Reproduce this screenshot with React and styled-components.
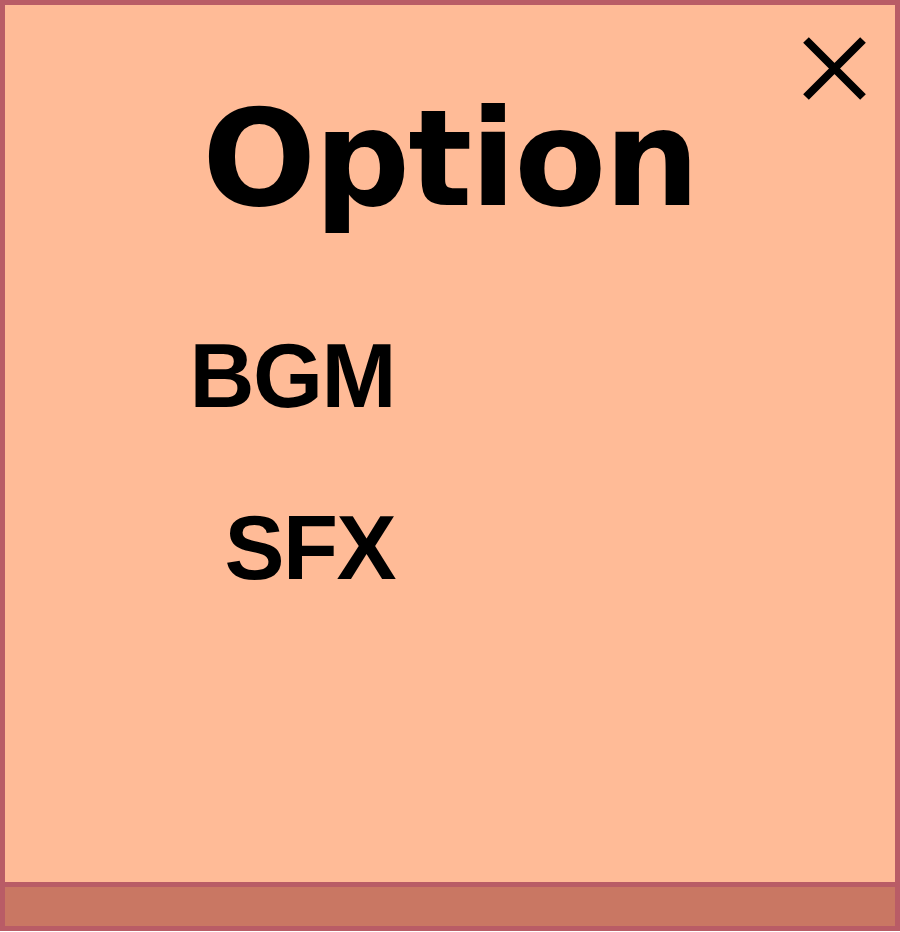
import React from "react";
import styled, { createGlobalStyle } from "styled-components";

const Global = createGlobalStyle`
  html, body { margin: 0; padding: 0; background: #ffffff; }
  * { box-sizing: border-box; }
`;

const Panel = styled.div`
  position: relative;
  width: 900px;
  height: 931px;
  border: 5px solid #b95c66;
  background: #ffbb97;
  display: flex;
  flex-direction: column;
`;

const Body = styled.div`
  flex: 1;
  display: flex;
  flex-direction: column;
`;

const Title = styled.h1`
  margin: 79px 0 0;
  text-align: center;
  font-family: "DejaVu Sans", "Open Sans", sans-serif;
  font-weight: 700;
  font-size: 134px;
  line-height: 150px;
  letter-spacing: -2px;
  color: #000;
`;

const Settings = styled.div`
  display: grid;
  grid-template-columns: 390px 1fr;
  row-gap: 72px;
  margin-top: 92px;
`;

const Label = styled.div`
  text-align: right;
  font-family: "Liberation Sans", Arial, sans-serif;
  font-weight: 700;
  font-size: 90px;
  line-height: 100px;
  letter-spacing: -1.5px;
  color: #000;
`;

const CloseButton = styled.button`
  position: absolute;
  top: 32px;
  right: 29px;
  width: 63px;
  height: 63px;
  padding: 0;
  border: 0;
  background: none;
  cursor: pointer;
`;

const Footer = styled.div`
  height: 44px;
  border-top: 5px solid #b95c66;
  background: #c97763;
`;

export default function App() {
  return (
    <>
      <Global />
      <Panel>
        <CloseButton aria-label="close">
          <svg width="63" height="63" viewBox="0 0 63 63">
            <path d="M3 3 L60 60 M60 3 L3 60" stroke="#000" strokeWidth="8" />
          </svg>
        </CloseButton>
        <Body>
          <Title>Option</Title>
          <Settings>
            <Label>BGM</Label>
            <div />
            <Label>SFX</Label>
            <div />
          </Settings>
        </Body>
        <Footer />
      </Panel>
    </>
  );
}
